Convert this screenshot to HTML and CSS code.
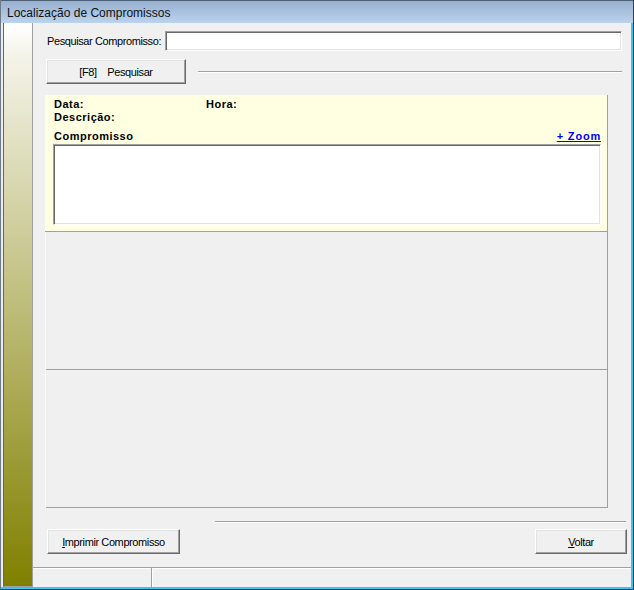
FILE: index.html
```html
<!DOCTYPE html>
<html lang="pt">
<head>
  <meta charset="UTF-8">
  <title>Localização de Compromissos</title>
  <link rel="stylesheet" href="styles.css">
</head>
<body>
  <div class="window">
    <div class="titlebar">Localização de Compromissos</div>
    <div class="frame">
      <div class="strip"></div>
      <div class="main">
        <div class="content">
          <div class="search-row">
            <label for="busca">Pesquisar Compromisso:</label>
            <input id="busca" class="edit" type="text">
          </div>

          <div class="action-row">
            <button type="button" class="btn btn-search">[F8]&nbsp;&nbsp;&nbsp; Pesquisar</button>
            <div class="etched"></div>
          </div>

          <div class="grid">
            <div class="panel selected">
              <div class="line">
                <span class="field data">Data:</span>
                <span class="field">Hora:</span>
              </div>
              <div class="line"><span class="field">Descrição:</span></div>
              <div class="line memo-head">
                <span class="field">Compromisso</span>
                <a href="#" class="zoom">+ Zoom</a>
              </div>
              <div class="memo"></div>
            </div>
            <div class="panel"></div>
            <div class="panel last"></div>
          </div>

          <div class="etched bottom-line"></div>

          <div class="footer">
            <button type="button" class="btn btn-print"><u>I</u>mprimir Compromisso</button>
            <button type="button" class="btn btn-back"><u>V</u>oltar</button>
          </div>
        </div>

        <div class="statusbar">
          <div class="status-cell first"></div>
          <div class="status-cell"></div>
        </div>
      </div>
    </div>
  </div>
</body>
</html>
```

FILE: styles.css
```css
html, body { margin: 0; padding: 0; }
body { width: 634px; height: 590px; overflow: hidden; font-family: "Liberation Sans", Arial, sans-serif; font-size: 11px; color: #000; }

.window { width: 634px; height: 590px; box-sizing: border-box; display: flex; flex-direction: column; border-left: 1px solid #6f7a86; border-right: 1px solid #2b3d52; border-bottom: 1px solid #2b3d52; background: #f0f0f0; }
.titlebar { height: 23px; box-sizing: border-box; padding: 5px 0 0 6px; font-size: 12px; color: #111; background: linear-gradient(#97b0cf, #bbd3ed); border-top: 1px solid #4d5f74; }

.frame { flex: 1; display: flex; padding-left: 2px; background: #e9edf1; border-right: 2px solid #3ec2ef; border-bottom: 2px solid #3ec2ef; }
.strip { width: 28px; border-left: 1px solid #3d6fa8; border-right: 1px solid #a0a0a0; border-bottom: 1px solid #a0a0a0; background: linear-gradient(#ffffff, #f4f3e8 6%, #808000); }

.main { flex: 1; display: flex; flex-direction: column; background: #f0f0f0; }
.content { flex: 1; }

.search-row { display: flex; align-items: center; margin-top: 8px; padding: 0 9px 0 14px; }
.search-row label { margin-right: 4px; letter-spacing: -0.4px; }

.edit { flex: 1; height: 20px; box-sizing: border-box; margin: 0; padding: 0 3px; font: inherit; background: #fff; border: 1px solid; border-color: #a0a0a0 #fff #fff #a0a0a0; box-shadow: inset 1px 1px #696969, inset -1px -1px #e3e3e3; outline: none; }

.btn { height: 25px; box-sizing: border-box; margin: 0; padding: 0; font: inherit; font-size: 11px; letter-spacing: -0.4px; color: #000; background: #f0f0f0; border: 1px solid; border-color: #fff #696969 #696969 #fff; box-shadow: inset -1px -1px #a0a0a0, inset 1px 1px #e3e3e3; cursor: pointer; }
.btn u { text-decoration: underline; }

.action-row { display: flex; align-items: center; margin-top: 8px; padding: 0 9px 0 13px; }
.btn-search { width: 140px; }
.etched { flex: 1; height: 0; border-top: 1px solid #a0a0a0; border-bottom: 1px solid #fff; }
.action-row .etched { margin-left: 12px; }

.grid { margin: 11px 23px 0 12px; height: 413px; display: flex; flex-direction: column; border-right: 1px solid #a0a0a0; border-left: 1px solid #fbfbfb; }
.panel { flex: 1; border-bottom: 1px solid #a0a0a0; }
.panel.selected { flex: none; height: 137px; margin-left: -1px; padding: 3px 6px 0 9px; box-sizing: border-box; background: #ffffe1; }
.panel.last { flex: none; height: 137px; }

.line { display: flex; height: 13px; line-height: 13px; }
.field { font-weight: bold; letter-spacing: 0.5px; }
.field.data { width: 152px; }
.memo-head { margin-top: 6px; justify-content: space-between; }
.zoom { color: #0000ff; font-weight: bold; text-decoration: underline; letter-spacing: 0.8px; }

.memo { height: 81px; margin: 1px 0 0 -1px; box-sizing: border-box; background: #fff; border: 1px solid; border-color: #a0a0a0 #fff #fff #a0a0a0; box-shadow: inset 1px 1px #696969, inset -1px -1px #e3e3e3; }

.bottom-line { margin: 13px 5px 0 182px; }

.footer { display: flex; justify-content: space-between; margin-top: 6px; padding: 0 4px 0 14px; }
.btn-print { width: 133px; }
.btn-back { width: 92px; }

.statusbar { display: flex; height: 19px; border-top: 1px solid #a0a0a0; box-shadow: inset 0 1px #fff; }
.status-cell { flex: 1; }
.status-cell.first { flex: none; width: 118px; border-right: 1px solid #a0a0a0; box-shadow: 1px 0 #fff; }
```
